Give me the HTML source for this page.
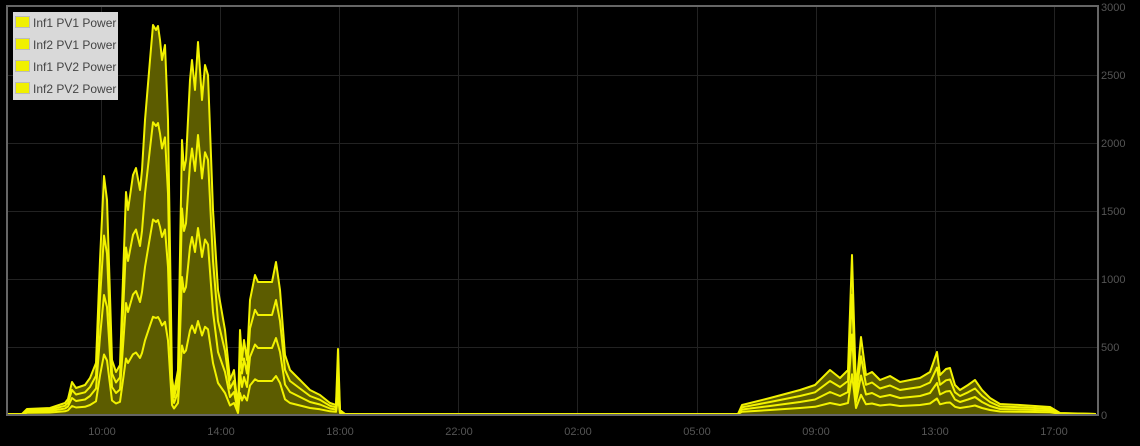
<!DOCTYPE html>
<html><head><meta charset="utf-8"><style>
html,body{margin:0;padding:0;background:#000;width:1140px;height:446px;overflow:hidden}
svg{display:block}
text{font-family:"Liberation Sans",sans-serif;font-size:11px;fill:#555}
.leg{position:absolute;left:13px;top:12px;width:105px;height:88px;background:#d9d9d9}
.leg div{position:absolute;left:2px;height:14px;font:12px "Liberation Sans",sans-serif;color:#444;line-height:14px;white-space:nowrap}
.leg span{display:inline-block;width:13px;height:10px;background:#f0f000;border:1px solid #bbb;margin-right:3px;vertical-align:-1px}
</style></head><body>
<svg id="s" width="1140" height="446" xmlns="http://www.w3.org/2000/svg">
<g stroke="#222" stroke-width="1">
<line x1="8" y1="75.5" x2="1097" y2="75.5"/><line x1="8" y1="143.5" x2="1097" y2="143.5"/>
<line x1="8" y1="211.5" x2="1097" y2="211.5"/><line x1="8" y1="279.5" x2="1097" y2="279.5"/>
<line x1="8" y1="347.5" x2="1097" y2="347.5"/>
<line x1="101.5" y1="7" x2="101.5" y2="414"/><line x1="220.5" y1="7" x2="220.5" y2="414"/>
<line x1="339.5" y1="7" x2="339.5" y2="414"/><line x1="458.5" y1="7" x2="458.5" y2="414"/>
<line x1="577.5" y1="7" x2="577.5" y2="414"/><line x1="697.5" y1="7" x2="697.5" y2="414"/>
<line x1="816.5" y1="7" x2="816.5" y2="414"/><line x1="935.5" y1="7" x2="935.5" y2="414"/>
<line x1="1054.5" y1="7" x2="1054.5" y2="414"/>
</g>
<g id="d"></g>
<rect x="7" y="6" width="1091" height="409" fill="none" stroke="#666" stroke-width="2"/>
<g>
<text x="1101" y="11">3000</text><text x="1101" y="79">2500</text><text x="1101" y="147">2000</text>
<text x="1101" y="215">1500</text><text x="1101" y="283">1000</text><text x="1101" y="351">500</text>
<text x="1101" y="419">0</text>
</g>
<g text-anchor="middle">
<text x="102" y="435">10:00</text><text x="221" y="435">14:00</text><text x="340" y="435">18:00</text>
<text x="459" y="435">22:00</text><text x="578" y="435">02:00</text><text x="697" y="435">05:00</text>
<text x="816" y="435">09:00</text><text x="935" y="435">13:00</text><text x="1054" y="435">17:00</text>
</g>
</svg>
<div class="leg">
<div style="top:4px"><span></span>Inf1 PV1 Power</div>
<div style="top:26px"><span></span>Inf2 PV1 Power</div>
<div style="top:48px"><span></span>Inf1 PV2 Power</div>
<div style="top:70px"><span></span>Inf2 PV2 Power</div>
</div>
<script>
var P=[[8,414],[22,414],[27,409],[50,408],[65,403],[68,399],[72,382],[76,388],[85,385],[90,378],[96,363],[100,260],[104,176],[107,200],[112,360],[116,372],[120,365],[124,250],[126,192],[128,210],[133,175],[136,168],[140,190],[142,170],[145,120],[150,60],[153,25],[156,30],[158,26],[160,40],[162,60],[165,45],[168,120],[172,378],[174,392],[178,370],[182,140],[184,170],[186,160],[190,80],[192,60],[195,90],[198,42],[200,70],[202,100],[205,65],[208,75],[213,210],[218,290],[225,330],[230,380],[234,370],[238,410],[240,330],[242,360],[244,340],[247,360],[250,300],[255,275],[258,282],[272,282],[276,262],[280,290],[285,355],[290,370],[300,380],[310,390],[320,395],[330,403],[336,405],[338,349],[340,410],[345,414],[738,414],[742,405],[770,398],[800,390],[815,385],[830,370],[840,378],[848,370],[852,255],[856,390],[861,337],[866,375],[872,372],[880,380],[890,376],[900,382],[910,380],[920,378],[930,372],[937,352],[940,375],[946,369],[950,368],[955,385],[960,390],[968,385],[975,380],[982,390],[990,398],[1000,404],[1020,405],[1050,407],[1060,413],[1096,414]];
var g=document.getElementById('d'),ns='http://www.w3.org/2000/svg';
function pts(f){return P.map(function(p){return p[0]+','+(414-(414-p[1])*f).toFixed(1)}).join(' ')}
var poly=document.createElementNS(ns,'polygon');
poly.setAttribute('points',pts(1)+' 1096,414 8,414');poly.setAttribute('fill','#5c5c00');g.appendChild(poly);
[0.25,0.5,0.75,1].forEach(function(f){var l=document.createElementNS(ns,'polyline');
l.setAttribute('points',pts(f));l.setAttribute('fill','none');l.setAttribute('stroke','#f2f200');
l.setAttribute('stroke-width','2');l.setAttribute('stroke-linejoin','round');g.appendChild(l);});
</script>
</body></html>
